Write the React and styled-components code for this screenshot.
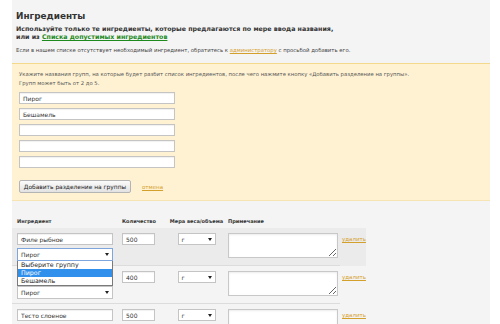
import React from 'react';
import styled, { createGlobalStyle } from 'styled-components';

const GlobalStyle = createGlobalStyle`
  body {
    margin: 0;
    background: #fff;
    font-family: "DejaVu Sans", Verdana, sans-serif;
    color: #333;
  }
`

const Panel = styled.div`
  margin-left: 12px;
  width: 478px;
  height: 324px;
  overflow: hidden;
  background: #f4f4f4;
  padding-top: 10px;
  box-sizing: border-box;
`
const Intro = styled.div`
  padding: 0 4px;
`
const Title = styled.h1`
  margin: 0;
  font-size: 8.9px;
  line-height: 12px;
  font-weight: bold;
  color: #333;
`
const Lead = styled.p`
  margin: 3px 0 0;
  font-size: 6.3px;
  line-height: 8px;
  font-weight: bold;
  color: #333;
`
const Note = styled.p`
  margin: 5px 0 0;
  font-size: 5.35px;
  line-height: 8px;
  color: #444;
`
const Link = styled.a`
  color: ${p => p.green ? '#1d8a1d' : '#d4a02c'};
  text-decoration: underline;
  cursor: pointer;
`
const GroupBox = styled.div`
  margin: 9px -3px 0 0;
  padding: 6px 7px 7px;
  background: #fff2d3;
  border-top: 1px solid #f4d98c;
  border-bottom: 1px solid #f6e4b4;
`
const Hint = styled.p`
  margin: 0;
  font-size: 5.3px;
  line-height: 9px;
  color: #555;
`
const GroupList = styled.div`
  margin-top: 4px;
  display: flex;
  flex-direction: column;
  gap: 4px;
`
const TextInput = styled.input`
  box-sizing: border-box;
  width: ${p => p.w}px;
  height: 12px;
  margin: 0;
  padding: 0 3px;
  border: 1px solid #c4c4c4;
  box-shadow: inset 0 1px 1px rgba(0,0,0,0.06);
  background: #fff;
  font-family: inherit;
  font-size: 6px;
  color: #333;
  outline: none;
`
const Actions = styled.div`
  margin-top: 12px;
  display: flex;
  align-items: center;
  gap: 11px;
`
const Button = styled.button`
  box-sizing: border-box;
  width: 112px;
  height: 13px;
  padding: 0;
  border: 1px solid #b4b4b4;
  border-radius: 2px;
  background: linear-gradient(#fbfbfb, #e2e2e2);
  font-family: inherit;
  font-size: 5.9px;
  color: #222;
`
const Cancel = styled(Link)`
  font-size: 5.5px;
  margin-top: 1px;
`
const Table = styled.div`
  margin-top: 13px;
  width: 354px;
`
const Grid = styled.div`
  display: grid;
  grid-template-columns: 105px 43px 63px 114px 24px;
  padding-left: 5px;
`
const HeadRow = styled(Grid)`
  height: 14px;
  align-items: center;
  font-size: 5px;
  font-weight: bold;
  color: #333;
`
const HeadCell = styled.div`
  text-align: ${p => p.center ? 'center' : 'left'};
  white-space: nowrap;
`
const Row = styled(Grid)`
  padding: 5px 0 5px 5px;
  background: linear-gradient(#dcdcdc, #dcdcdc) no-repeat left bottom / 328px 1px,
    ${p => p.active ? '#ebebeb' : 'transparent'};
`
const Cell = styled.div`
  display: flex;
  flex-direction: column;
  align-items: ${p => p.center ? 'center' : 'flex-start'};
  gap: 3px;
`
const SelectWrap = styled.div`
  position: relative;
`
const SelectBox = styled.div`
  box-sizing: border-box;
  width: ${p => p.w}px;
  height: ${p => p.h || 12}px;
  padding: 0 3px;
  display: flex;
  align-items: center;
  justify-content: space-between;
  border: 1px solid ${p => p.focus ? '#7ea6dc' : '#c4c4c4'};
  background: #fff;
  font-size: 6px;
  color: #333;
  &::after {
    content: '';
    border-left: 2px solid transparent;
    border-right: 2px solid transparent;
    border-top: 3px solid #222;
  }
`
const Options = styled.ul`
  position: absolute;
  top: 100%;
  left: 0;
  z-index: 2;
  box-sizing: border-box;
  width: 96px;
  margin: 0;
  padding: 0;
  list-style: none;
  background: #fff;
  border: 1px solid #7a7a7a;
  border-top: none;
`
const Option = styled.li`
  height: 8px;
  line-height: 8px;
  padding-left: 3px;
  font-size: 6.3px;
  color: ${p => p.selected ? '#fff' : '#222'};
  background: ${p => p.selected ? '#3190ec' : 'transparent'};
`
const Remark = styled.textarea`
  box-sizing: border-box;
  width: 110px;
  height: 25px;
  margin: 0;
  padding: 2px;
  border: 1px solid #c8c8c8;
  box-shadow: inset 0 1px 2px rgba(0,0,0,0.08);
  background: #fff;
  font-family: inherit;
  font-size: 5.5px;
  resize: both;
`
const Remove = styled(Link)`
  font-size: 5.5px;
  margin-top: 3px;
`

const groups = ['Пирог', 'Бешамель', '', '', ''];

const ingredients = [
  { name: 'Филе рыбное', qty: '500', group: 'Пирог', open: true },
  { name: 'Масло сливочное', qty: '400', group: 'Пирог' },
  { name: 'Тесто слоеное', qty: '500', group: 'Пирог' },
];

class App extends React.Component {
  renderRow(item, idx) {
    return (
      <Row key={idx} active={item.open}>
        <Cell>
          <TextInput w={96} defaultValue={item.name} readOnly />
          <SelectWrap>
            <SelectBox w={96} h={13} focus={item.open}>{item.group}</SelectBox>
            {item.open &&
              <Options>
                <Option>Выберите группу</Option>
                <Option selected>Пирог</Option>
                <Option>Бешамель</Option>
              </Options>
            }
          </SelectWrap>
        </Cell>
        <Cell>
          <TextInput w={33} defaultValue={item.qty} readOnly />
        </Cell>
        <Cell center>
          <SelectBox w={38}>г</SelectBox>
        </Cell>
        <Cell>
          <Remark />
        </Cell>
        <Cell>
          <Remove>удалить</Remove>
        </Cell>
      </Row>
    )
  }

  render() {
    return (
      <Panel>
        <GlobalStyle />
        <Intro>
          <Title>Ингредиенты</Title>
          <Lead>
            Используйте только те ингредиенты, которые предлагаются по мере ввода названия,
            <br></br>
            или из <Link green>Списка допустимых ингредиентов</Link>
          </Lead>
          <Note>
            Если в нашем списке отсутствует необходимый ингредиент, обратитесь к <Link>администратору</Link> с просьбой добавить его.
          </Note>
        </Intro>
        <GroupBox>
          <Hint>
            Укажите названия групп, на которые будет разбит список ингредиентов, после чего нажмите кнопку «Добавить разделение на группы».
            <br></br>
            Групп может быть от 2 до 5.
          </Hint>
          <GroupList>
            {groups.map((g, i) => <TextInput key={i} w={156} defaultValue={g} readOnly />)}
          </GroupList>
          <Actions>
            <Button>Добавить разделение на группы</Button>
            <Cancel>отмена</Cancel>
          </Actions>
        </GroupBox>
        <Table>
          <HeadRow>
            <HeadCell>Ингредиент</HeadCell>
            <HeadCell>Количество</HeadCell>
            <HeadCell center>Мера веса/объема</HeadCell>
            <HeadCell>Примечание</HeadCell>
          </HeadRow>
          {ingredients.map((item, idx) => this.renderRow(item, idx))}
        </Table>
      </Panel>
    )
  }
}

export default App;
